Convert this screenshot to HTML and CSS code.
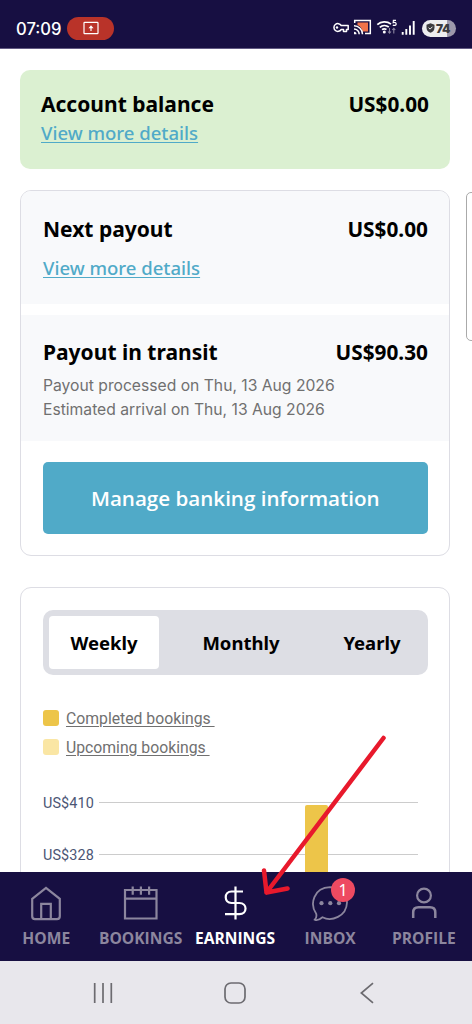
FILE: index.html
```html
<!DOCTYPE html>
<html lang="en">
<head>
<meta charset="utf-8">
<title>Earnings</title>
<link rel="stylesheet" href="styles.css">
</head>
<body>
<div class="phone">
  <header class="status">
    <span class="clock">07:09</span>
    <span class="cast-pill">
      <svg width="16" height="14" viewBox="0 0 16 14" fill="none" stroke="#fff" stroke-width="1.2"><rect x="1" y="1.3" width="14" height="11.4" rx=".8"/><path d="M8 10V6"/><path d="M5.4 7.2 8 4.2l2.600 3z" fill="#fff" stroke="none"/></svg>
    </span>
    <svg class="status-icons" width="86" height="20" viewBox="0 0 86 20" fill="none" stroke="#fff">
      <path d="M9.200 7.500A3.900 3.900 0 1 0 9.200 11.500H11.500V13.400H14.500V11.500H16.200V7.500Z" stroke-width="1.500" stroke-linejoin="round"/>
      <circle cx="5" cy="9.500" r="1.200" fill="#fff" stroke="none"/>
      <path d="M25.500 4.500H36V13.500H30.500C29.800 10 28 8 25.500 7Z" fill="#f0734a" stroke="none"/>
      <path d="M22.700 5V2.500H38.300V15.500H33" stroke-width="1.500"/>
      <path d="M22 7.800A8.500 8.500 0 0 1 30.500 16.300M22 11A5.200 5.200 0 0 1 27.200 16.300" stroke-width="1.500"/>
      <path d="M22 13.700A2.500 2.500 0 0 1 24.500 16.300H22Z" fill="#fff" stroke="none"/>
      <path d="M45.300 6.700A10.500 10.500 0 0 1 59 6.200M47.800 9.300A7 7 0 0 1 56.800 9M50 11.600A4 4 0 0 1 54.500 11.500" stroke-width="1.700"/>
      <circle cx="52.300" cy="14" r="1.500" fill="#fff" stroke="none"/>
      <path d="M57.500 10V15M56 13.500 57.500 15.200 59 13.500M61.800 15.500V10.500M60.300 12 61.800 10.300 63.300 12" stroke="#8b86a0" stroke-width="1.100"/>
      <path d="M64 2.300H61.400L61.200 4.700C62.700 4.100 64.200 4.700 64.200 6S62.300 7.900 60.800 7" stroke-width="1.200"/>
      <path d="M70.700 16.700V14M74.300 16.700V11M78 16.700V7.500M81.700 16.700V3" stroke-width="1.900"/>
    </svg>
    <span class="battery">
      <svg width="9" height="10" viewBox="0 0 9 10"><path d="M4.500 .3 8.500 1.700V4.800C8.500 7.300 6.800 9 4.500 9.800 2.200 9 .5 7.300 .5 4.800V1.700Z" fill="#3c3b40"/><path d="M2.600 4.700 4.100 6.100 6.500 3.700" fill="none" stroke="#ededf0" stroke-width="1"/></svg>
      <b>74</b>
    </span>
  </header>

  <main class="content">
    <section class="balance">
      <div class="row"><h2>Account balance</h2><strong>US$0.00</strong></div>
      <a class="link">View more details</a>
    </section>

    <section class="card payouts">
      <div class="next">
        <div class="row"><h2>Next payout</h2><strong>US$0.00</strong></div>
        <a class="link">View more details</a>
      </div>
      <div class="transit">
        <div class="row"><h2>Payout in transit</h2><strong>US$90.30</strong></div>
        <p class="note">Payout processed on Thu, 13 Aug 2026</p>
        <p class="note note-arrival">Estimated arrival on Thu, 13 Aug 2026</p>
      </div>
      <button class="manage">Manage banking information</button>
    </section>

    <section class="card chart-card">
      <div class="tabs">
        <span class="tab active">Weekly</span>
        <span class="tab">Monthly</span>
        <span class="tab yearly">Yearly</span>
      </div>
      <div class="legend">
        <span class="swatch"></span><u class="completed">Completed bookings&nbsp;</u>
        <span class="swatch pale"></span><u class="upcoming">Upcoming bookings&nbsp;</u>
      </div>
      <div class="chart">
        <div class="tick"><span>US$410</span><i></i></div>
        <div class="tick"><span>US$328</span><i></i></div>
        <div class="bar"></div>
      </div>
    </section>
    <div class="next-card"></div>
  </main>

  <nav class="tabbar">
    <div class="item">
      <svg width="38" height="38" viewBox="0 0 38 38"><path d="M5.200 14.800 19 3.800 32.800 14.800V32.300Q32.800 35.200 30 35.200H8Q5.200 35.200 5.200 32.300ZM14.200 35V19.800H23.800V35"/></svg>
      <span>HOME</span>
    </div>
    <div class="item bookings">
      <svg width="38" height="38" viewBox="0 0 38 38"><path d="M3 6H34.500V34.500H3ZM3 14.700H34.500M10.700 2.500V10.700M18.900 2.500V10.700M27.100 2.500V10.700"/></svg>
      <span>BOOKINGS</span>
    </div>
    <div class="item current">
      <svg width="38" height="38" viewBox="0 0 38 38"><path d="M19.500 2.500V35.500M27 7.500H15.500C7.800 7.500 7.800 19 15.500 19H23.300C31.600 19 31.600 30.200 23.300 30.200H9"/></svg>
      <span>EARNINGS</span>
    </div>
    <div class="item inbox">
      <svg width="38" height="38" viewBox="0 0 38 38"><path d="M5.200 29.800C-1.500 20.200 2.500 3.700 19 3.200 30 3.200 36 10.500 36 18.500 35.500 32.500 20.500 38 11.500 33.300 8.500 35.800 5.200 36.500 3.800 35.700 5.200 34.300 5.800 32.300 5.200 29.800Z" stroke-width="1.800"/><g fill="#8c869e" stroke="none"><circle cx="10.500" cy="19.200" r="2.100"/><circle cx="19.300" cy="19.200" r="2.100"/><circle cx="28" cy="19.200" r="2.100"/></g></svg>
      <em class="badge">1</em>
      <span>INBOX</span>
    </div>
    <div class="item profile">
      <svg width="38" height="38" viewBox="0 0 38 38"><circle cx="19" cy="11.500" r="6.900"/><path d="M8.200 34V28.500Q8.200 23.300 13.500 23.300H25Q30.300 23.300 30.300 28.500V34" stroke-width="2.500"/></svg>
      <span>PROFILE</span>
    </div>
  </nav>

  <footer class="system">
    <svg width="20" height="22" viewBox="0 0 20 22"><path d="M1.700 1V21M10 1V21M18.300 1V21"/></svg>
    <svg width="24" height="24" viewBox="0 0 24 24"><rect x="2" y="2" width="20" height="20" rx="6"/></svg>
    <svg width="14" height="22" viewBox="0 0 14 22"><path d="M13 1.200 1.300 11 13 20.800"/></svg>
  </footer>

  <svg class="arrow" width="140" height="170" viewBox="0 0 140 170"><path d="M128.500 8 11.500 162.500M9 140.500 11.500 162.500 32.500 158.500"/></svg>
</div>
</body>
</html>
```

FILE: styles.css
```css
* { box-sizing: border-box; }
body { margin: 0; background: #fff; }
.phone { position: relative; display: flex; flex-direction: column; width: 472px; height: 1024px; overflow: hidden; color: #000; font-family: "Noto Sans", sans-serif; }
h2, p { margin: 0; }

.status { flex: none; display: flex; align-items: center; height: 49px; padding: 8px 15px 0 16px; background: #170f42; border-bottom: 1px solid #625a83; color: #fff; }
.clock { width: 51px; padding-top: 1px; font: 500 16.600px/24px Inter, sans-serif; }
.cast-pill { display: flex; align-items: center; justify-content: center; width: 47px; height: 23px; border-radius: 12px; background: #b93329; }
.status-icons { flex: none; margin-left: 218px; }
.battery { flex: none; display: flex; align-items: center; gap: 1px; width: 34px; height: 17px; margin-left: 4px; padding-left: 4px; border-radius: 9px; background: linear-gradient(90deg, #ededf0 75%, #9d98ab 75%); color: #3c3b40; font: 700 12px/17px Inter, sans-serif; letter-spacing: -.4px; }

.content { position: relative; flex: none; height: 823px; padding: 20.500px 22px 0 20px; overflow: hidden; }
.row { display: flex; justify-content: space-between; align-items: center; height: 26px; line-height: 26px; }
h2, strong { font-size: 21px; font-weight: 700; white-space: nowrap; }
strong { font-size: 20.800px; }
.link { display: block; font-size: 18.550px; line-height: 26px; font-weight: 500; color: #50aac8; text-decoration: underline; text-decoration-thickness: 1px; text-underline-offset: 2px; }
.balance { height: 99px; padding: 21px 21px 0; border-radius: 10px; background: #dbf0d1; }
.balance .link { padding-top: 3px; }
.card { border: 1.500px solid #dddde4; border-radius: 11px; background: #fff; }
.payouts { height: 366px; margin-top: 21px; overflow: hidden; }
.next { height: 113px; padding: 25px 21px 0 22px; background: #f8f9fb; }
.next .link { margin-top: 13px; }
.transit { height: 126px; margin-top: 11px; padding: 24px 21px 0 22px; background: #f8f9fb; }
.note { margin-top: 9px; color: #707070; font: 400 15.680px/24px Inter, sans-serif; white-space: nowrap; }
.note-arrival { margin-top: 0; }
.manage { display: block; width: 385.500px; height: 72px; margin: 21px 0 0 21.500px; padding: 0; border: 0; border-radius: 5px; background: #50aac8; color: #fff; font: 600 20.600px/28px "Open Sans", sans-serif; }

.chart-card { height: 400px; margin-top: 31px; padding: 22px 21px 0 22px; }
.tabs { display: flex; align-items: stretch; height: 65px; padding: 6px; border-radius: 10px; background: #dddee4; font-size: 18.500px; font-weight: 700; line-height: 53px; text-align: center; }
.tab { flex: none; width: 110px; height: 53px; border-radius: 4px; }
.tab.active { background: #fff; }
.tab + .tab { margin-left: 27px; }
.tab.yearly { margin-left: 21px; }
.legend { display: grid; grid-template-columns: 16px 1fr; column-gap: 7px; align-items: center; grid-auto-rows: 29px; margin-top: 29px; color: #707070; font: 400 15.750px/24px Roboto, sans-serif; }
.legend u { justify-self: start; padding-top: 1px; text-decoration-thickness: 1px; text-underline-offset: 2px; }
.swatch { height: 16px; border-radius: 3px; background: #edc549; }
.swatch.pale { background: #fae6a4; }
.chart { position: relative; height: 112px; margin-top: 15px; }
.tick { display: flex; align-items: center; height: 52px; color: #4b5675; font: 400 14.400px/24px Roboto, sans-serif; }
.tick span { width: 56px; padding-top: 2px; letter-spacing: .1px; }
.tick i { width: 319px; height: 1.500px; background: #ccc; }
.bar { position: absolute; left: 262px; top: 28px; width: 23px; height: 120px; border-radius: 2px 2px 0 0; background: #edc549; }
.next-card { position: absolute; left: 466px; top: 143px; width: 80px; height: 149px; border: 1px solid #aaa; border-radius: 5px; }

.tabbar { flex: none; display: grid; grid-template-columns: repeat(5, 94.400px); height: 89px; padding-top: 12px; background: #170f42; color: #8c869e; font-size: 15.600px; line-height: 20px; font-weight: 700; }
.item { position: relative; display: flex; flex-direction: column; align-items: center; width: 92.500px; }
.item svg { fill: none; stroke: #8c869e; stroke-width: 2.200; stroke-linecap: butt; }
.item span { margin-top: 6px; font-family: "Open Sans", sans-serif; }
.current { color: #fff; }
.current svg { stroke: #fff; }
.item.inbox { width: 94px; }
.badge { position: absolute; left: 48px; top: -6px; width: 24px; height: 24px; border-radius: 50%; background: #ee4a61; color: #fff; font: 400 16px/24px "Noto Sans", sans-serif; text-align: center; }

.system { flex: none; display: flex; align-items: center; height: 63px; padding-left: 93px; background: #e8e7ec; }
.system svg { fill: none; stroke: #6c6b70; stroke-width: 1.700; }
.system svg + svg { margin-left: 110px; }
.system svg:last-child { margin-left: 113px; }
.arrow { position: absolute; left: 255px; top: 730px; fill: none; stroke: #e8192c; stroke-width: 4.500; stroke-linecap: round; stroke-linejoin: round; }
```
